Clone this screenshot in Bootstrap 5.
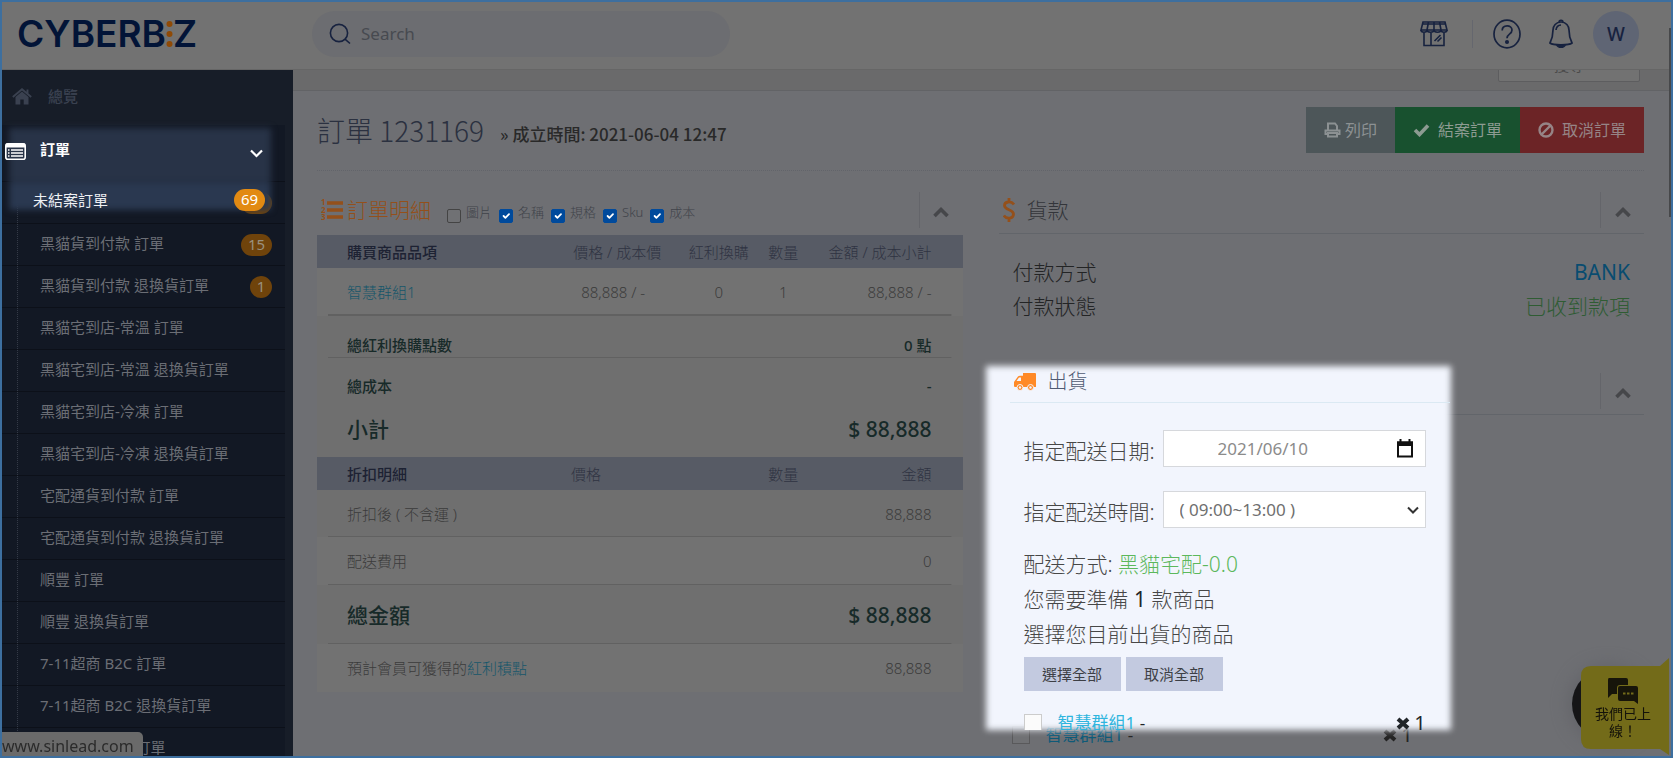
<!DOCTYPE html>
<html lang="zh-Hant">
<head>
<meta charset="utf-8">
<meta name="viewport" content="width=device-width, initial-scale=1">
<title>訂單 1231169 - CYBERBIZ</title>
<link href="https://cdn.jsdelivr.net/npm/bootstrap@5.3.0/dist/css/bootstrap.min.css" rel="stylesheet">
<style>
:root{--edge:#3d6f9f;--head:#727272;--page:#6e6f73;--side:#171d28;--sub:#121824;--bar:#575b65;--orange:#94501b;--navy:#17223f}
body{font-family:"Noto Sans","Noto Sans CJK TC",sans-serif;font-size:15px;line-height:20px;font-weight:300;background:var(--page);color:#33353a}
a{text-decoration:none}
svg{display:block;flex:none}
.frame{height:100vh;border:2px solid var(--edge);overflow:hidden}
.topbar{height:68px;background:var(--head);flex:none;border-bottom:1px solid #666;padding:0 32px 4px 15px}
.brand{width:295px;font-family:Inter,sans-serif;font-weight:600;font-size:37px;line-height:40px;color:#021437}
.search{width:418px;height:46px;background:#6c6d71;border-radius:23px;padding:0 17px}
.search input{background:none;border:0;outline:0;color:#4b4e55;font-size:17px;font-weight:400}
.search input::placeholder{color:#474a50;opacity:1}
.tool{background:none;border:0;padding:0;color:var(--navy)}
.rule-v{width:1px;height:28px;background:#65676e}
.avatar{width:46px;height:46px;background:#5f6574;color:var(--navy);font-size:19px;font-weight:500}
.sidebar{width:291px;background:var(--side);flex:none;overflow:hidden}
.home{height:55px;padding:0 0 3px 10px;color:#3a4150;font-weight:500}
.menu{width:283px;background:var(--sub)}
.menu .group{height:56px}
.menu ul{margin:0}
.menu li{border-top:1px solid #0c1019;height:42px}
.menu li a{color:#6b6e75;padding:0 13px 4px 38px;height:41px;font-weight:400}
.menu li .pill{margin-top:4px}
.tree{left:15px;top:56px;bottom:0;border-left:1px dotted #343a47}
.pill{min-width:31px;height:22px;border-radius:11px;background:#6f430b;color:#99917f;font-size:15px;line-height:21px;text-align:center;font-weight:400}
.pill-round{min-width:22px}
.lit{left:6px;top:1px;width:264px;height:86px;z-index:2}
.lit::before{content:"";position:absolute;inset:2px 1px 2px 1px;background:linear-gradient(#283347 53px,#151c29 53px,#151c29 54px,#2a3850 54px);filter:blur(3px)}
.lit>*{position:relative}
.lit .tophalf{height:54px;padding:0 9px 4px 0;margin-left:-3px;gap:14px;color:#fff;font-weight:700}
.lit .lowhalf{height:34px;padding:5px 7px 0 25px;color:#eef0f4;font-weight:400}
.lit .lowhalf a{color:inherit}
.lit .pill{background:#e28a12;color:#fff}
.content{min-width:0;overflow:hidden}
.strip{height:21px;background:#6a6a6b;border-bottom:1px solid #626366;overflow:hidden;padding:0 31px 8px 0}
.strip button{width:142px;height:34px;background:#727272;border:1px solid #5d5d5f;border-radius:2px;color:#4a4a4a;font-size:15px;flex:none}
.inner{padding:0 27px 0 24px}
.titlebar{height:80px;border-bottom:1px dotted #62646a;padding-bottom:2px}
.titlebar h1,.titlebar h2{font-family:"Noto Sans CJK TC","Noto Sans",sans-serif}
.titlebar h1{font-size:28px;line-height:40px;font-weight:300;color:#2b3140}
.titlebar h2{font-size:17px;line-height:24px;font-weight:500;color:#292929}
.act{height:46px;border:0;border-radius:0;font-size:16px;padding:0 18px;color:#8c9193}
.act-print{background:#4d5659}.act-done{background:#18512f;color:#8d9b92}.act-stop{background:#6c2426;color:#968486}
.columns{--bs-gutter-x:36px;padding-top:21px}
.phead{height:36px}
.phead h3{font-size:21px;line-height:28px;font-weight:300}
.fold{width:44px;height:36px;background:none;border:0;border-left:1px solid #64656a;color:#46474a;padding-top:4px}
.underline{border-bottom:1px solid #62656a;padding-bottom:6px;height:42px}
.opt{font-size:13px;line-height:20px;color:#40434a;gap:5px}
.opt label{margin-right:2px}
.opt input.form-check-input{width:14px;height:14px;margin:7px 0 0;border:1px solid #444;border-radius:2px;background-color:#707174;flex:none}
.opt input.form-check-input:checked{background-color:#004a9c;border-color:#004a9c}
.orders{width:100%;table-layout:fixed;margin-top:7px;background:#727272;color:#3b3b3b}
.orders td,.orders th{padding:0;font-weight:300}
.orders th:first-child,.orders td:first-child{padding-left:30px}
.orders th:last-child,.orders td:last-child{padding-right:31px;text-align:right}
.orders .cols{background:var(--bar);color:#2f3342;height:33px}
.orders .cols th:first-child{color:#1d2233;font-weight:500}
.orders .alt{background-color:#6f6f6f}
.line{background-image:linear-gradient(#616161,#616161);background-size:calc(100% - 22px) 1px;background-position:bottom center;background-repeat:no-repeat}
.line-2{background-size:calc(100% - 22px) 2px}
.orders .dark td{color:#172a29;font-weight:500;line-height:25px}
.orders .big td{font-size:21px;line-height:28px}
.h59{height:59px}.h57{height:57px}.h48{height:48px}.h47{height:47px}.h42{height:42px}
.orders a{color:#16566a}
.facts{font-size:21px;line-height:34px;padding:21px 14px 0;color:#232425}
.facts a{color:#084c70;font-weight:400}
.facts .ok{color:#2f5c33}
.ship{margin-top:50px}
.spot{left:-16px;top:-10px;width:73%;height:370px;z-index:2}
.spot::before{content:"";position:absolute;inset:3px;background:#f2f5fd;filter:blur(3px)}
.spot-in{position:relative;height:367px;overflow:hidden;font-size:21px;color:#474747}
.spot h3{font-size:20px;line-height:28px;font-weight:300;color:#4f5a72}
.spot-head{margin:0 4px 0 27px;height:40px;border-bottom:1px solid #dbe9f3;padding:0 0 2px 4px}
.spot-body{padding:27px 28px 0 41px}
.field{height:37px;border:1px solid #d6d8dc;border-radius:0;background-color:#fff;font-size:17px;color:#8b8b8b;font-weight:400;padding:0 16px}
.field-date{padding-left:54px}
.cal{right:12px;top:9px}
.pickrow{height:37px;margin-bottom:24px;gap:5px}
.pickrow label{white-space:nowrap;flex:none;width:134px;padding-top:5px}
select.field{color:#6f6f6f;background-image:url("data:image/svg+xml,%3Csvg xmlns='http://www.w3.org/2000/svg' viewBox='0 0 12 12'%3E%3Cpath d='M1 3.5 6 8.5 11 3.5' fill='none' stroke='%23333' stroke-width='2'/%3E%3C/svg%3E");background-size:12px 12px;background-position:right 6px center}
.spot p{line-height:35px;margin:0}
.spot .pickrow+p{margin-top:-5px}
.spot .ok{color:#5cb85c}
.picks{gap:5px;padding-top:5px}
.sel{width:97px;height:34px;background:#c3cae0;border:0;border-radius:0;font-size:15px;padding:0;color:#3d3f45;font-weight:400}
.item{font-size:17px;line-height:24px;font-weight:400}
.item a{color:#2fb5de}
.item .qty{font-size:20px}
.item input.form-check-input{width:18px;height:18px;margin:0;border-radius:0;border:1px solid #ccc;background:#fbfbfb}
.ghost{padding:0 70px 0 13px;margin-top:308px;color:#242424}
.ghost a{color:#0e5a78}
.ghost input.form-check-input{background:#707174;border-color:#59595b}
.chat{right:4px;bottom:3px;width:88px;height:97px;z-index:3}
.chat::before{content:"";position:absolute;left:-9px;top:10px;width:72px;height:72px;border-radius:36px;background:#151517;box-shadow:0 0 16px 4px #64656a}
.chat button{position:relative;background:none;border:0;width:84px;height:97px;padding:3px 12px 0 12px;font-size:14px;line-height:17px;color:#14120a;font-weight:400}
.chat .bubble{position:absolute;inset:0}
.status{left:2px;bottom:2px;width:141px;height:24px;background:#6a6a6a;border-radius:0 5px 0 0;color:#2b2b2b;font-size:16px;line-height:20px;padding-top:4px;font-weight:400;z-index:3;white-space:nowrap}
.scroll{right:2px;top:28px;width:2px;height:189px;background:#47484a;z-index:3}
</style>
</head>
<body>
<div class="frame d-flex flex-column">
  <header class="topbar d-flex align-items-center">
    <a href="#" class="brand d-flex align-items-center"><span>CYBERB</span>
      <svg width="7" height="28" viewBox="0 0 7 28" fill="#8f4a06"><circle cx="3.5" cy="4" r="3"/><circle cx="3.5" cy="14" r="3"/><circle cx="3.5" cy="24" r="3"/></svg><span>Z</span></a>
    <form class="search d-flex align-items-center gap-2">
      <svg width="22" height="22" viewBox="0 0 22 22" fill="none" stroke="#17223f" stroke-width="1.6"><circle cx="10" cy="10" r="8.6"/><path d="M16 16.2 21 20.500"/></svg>
      <input type="text" class="flex-grow-1" placeholder="Search" aria-label="Search">
    </form>
    <div class="d-flex align-items-center ms-auto">
      <button class="tool" aria-label="商店"><svg width="28" height="26" viewBox="0 0 28 26" fill="none" stroke="currentColor" stroke-width="1.600"><path d="M3 1h22l2 8H1z M8.500 1 7 9M14 1v8M19.500 1 21 9M3 3h22"/><path d="M1 9c0 3 6 3 6 0 0 3 7 3 7 0 0 3 7 3 7 0 0 3 6 3 6 0M4 12v12.500h20V12M11 12v12.500M14.500 20l6-6M17.500 20.500l4-4"/></svg></button>
      <span class="rule-v ms-4 me-3"></span>
      <button class="tool ms-1" aria-label="說明"><svg width="28" height="30" viewBox="0 0 28 30" fill="none" stroke="currentColor" stroke-width="1.700"><ellipse cx="14" cy="15" rx="13" ry="13.800"/><path d="M9.200 11.500c0-6 9.800-6 9.800-.5 0 4.500-5 3.800-5 8.200"/><circle cx="14" cy="23" r="1.200" fill="currentColor"/></svg></button>
      <button class="tool ms-4" aria-label="通知"><svg class="mx-1" width="24" height="30" viewBox="0 0 24 30" fill="none" stroke="currentColor" stroke-width="1.700"><path d="M10 3.500c0-3 4-3 4 0M12 3c-5 0-8 4-8 8 0 7-1 9-3 13 3 2.500 19 2.500 22 0-2-4-3-6-3-13 0-4-3-8-8-8zM7 11c.3-3 2-4.800 5-5"/><path d="M8 26c1 3 7 3 8 0z" fill="currentColor"/></svg></button>
      <button class="tool avatar rounded-circle ms-3 d-flex align-items-center justify-content-center">W</button>
    </div>
  </header>
  <div class="d-flex flex-grow-1 overflow-hidden">
    <nav class="sidebar">
      <div class="home d-flex align-items-center gap-3">
        <svg width="20" height="17" viewBox="0 0 20 17" fill="currentColor"><path d="M10 3.500 16.500 9v7.500h-4.800V11.500H8.300v5H3.500V9z"/><path d="M.8 9 10 1.200 19.200 9M15.500 1.500v4" fill="none" stroke="currentColor" stroke-width="1.900"/></svg><span>總覽</span>
      </div>
      <div class="menu position-relative">
        <div class="group"></div>
        <ul class="list-unstyled">
          <li><a href="#" class="d-flex align-items-center justify-content-end" aria-label="未結案訂單"><span class="pill"></span></a></li>
          <li><a href="#" class="d-flex align-items-center justify-content-between">黑貓貨到付款 訂單<span class="pill">15</span></a></li>
          <li><a href="#" class="d-flex align-items-center justify-content-between">黑貓貨到付款 退換貨訂單<span class="pill pill-round">1</span></a></li>
          <li><a href="#" class="d-flex align-items-center">黑貓宅到店-常溫 訂單</a></li>
          <li><a href="#" class="d-flex align-items-center">黑貓宅到店-常溫 退換貨訂單</a></li>
          <li><a href="#" class="d-flex align-items-center">黑貓宅到店-冷凍 訂單</a></li>
          <li><a href="#" class="d-flex align-items-center">黑貓宅到店-冷凍 退換貨訂單</a></li>
          <li><a href="#" class="d-flex align-items-center">宅配通貨到付款 訂單</a></li>
          <li><a href="#" class="d-flex align-items-center">宅配通貨到付款 退換貨訂單</a></li>
          <li><a href="#" class="d-flex align-items-center">順豐 訂單</a></li>
          <li><a href="#" class="d-flex align-items-center">順豐 退換貨訂單</a></li>
          <li><a href="#" class="d-flex align-items-center">7-11超商 B2C 訂單</a></li>
          <li><a href="#" class="d-flex align-items-center">7-11超商 B2C 退換貨訂單</a></li>
          <li><a href="#" class="d-flex align-items-center">全家超商 B2C 訂單</a></li>
        </ul>
        <span class="tree position-absolute"></span>
        <div class="lit position-absolute">
          <div class="tophalf d-flex align-items-center">
            <svg width="21" height="17" viewBox="0 0 21 17"><rect x=".8" y=".8" width="19.400" height="15.400" rx="2" fill="#283347" stroke="#fff" stroke-width="1.600"/><path d="M1 2.500h19" stroke="#fff" stroke-width="4"/><path d="M3 7h1.500M3 10h1.500M3 13h1.500M6 7h12M6 10h12M6 13h12" stroke="#fff" stroke-width="1.500"/></svg>
            <span class="mb-1">訂單</span>
            <svg class="ms-auto mt-1" width="13" height="9" viewBox="0 0 13 9" fill="none" stroke="#fff" stroke-width="2.200"><path d="M1 1.500 6.500 7 12 1.500"/></svg>
          </div>
          <div class="lowhalf d-flex align-items-center justify-content-between"><a href="#">未結案訂單</a><span class="pill">69</span></div>
        </div>
      </div>
    </nav>
    <main class="content flex-grow-1">
      <div class="strip d-flex justify-content-end align-items-end"><button>搜尋</button></div>
      <div class="inner">
        <div class="titlebar d-flex align-items-center">
          <h1 class="m-0">訂單 1231169</h1>
          <h2 class="m-0 ms-3 mt-2">» 成立時間: 2021-06-04 12:47</h2>
          <div class="d-flex ms-auto">
            <button class="btn act act-print d-flex align-items-center gap-1"><svg width="17" height="16" viewBox="0 0 17 16" fill="none" stroke="currentColor" stroke-width="2"><path d="M4 8V1.500h7L13 4v4M4 12H1.500V8.500h14V12H13M4 11h9v3.500H4z"/></svg>列印</button>
            <button class="btn act act-done d-flex align-items-center gap-2"><svg width="17" height="14" viewBox="0 0 17 14" fill="none" stroke="currentColor" stroke-width="3.600"><path d="M2 7l4.500 4.500L15 2.500"/></svg>結案訂單</button>
            <button class="btn act act-stop d-flex align-items-center gap-2"><svg width="16" height="16" viewBox="0 0 16 16" fill="none" stroke="currentColor" stroke-width="2.400"><circle cx="8" cy="8" r="6.500"/><path d="M3.500 12.500l9-9"/></svg>取消訂單</button>
          </div>
        </div>
        <div class="row columns">
          <section class="col-6">
            <div class="phead d-flex align-items-center">
              <svg class="ms-1" width="22" height="22" viewBox="0 0 22 22" style="color:var(--orange)"><path d="M6 4h16M6 11h16M6 18h16" stroke="currentColor" stroke-width="3.600"/><g fill="currentColor" font-size="8" font-weight="700" font-family="Open Sans, sans-serif"><text x="0" y="6">1</text><text x="0" y="14">2</text><text x="0" y="21">3</text></g></svg>
              <h3 class="m-0 ms-1" style="color:var(--orange)">訂單明細</h3>
              <div class="opt d-flex ms-3 mt-1">
                <input class="form-check-input" type="checkbox" id="o1"><label for="o1">圖片</label>
                <input class="form-check-input" type="checkbox" id="o2" checked><label for="o2">名稱</label>
                <input class="form-check-input" type="checkbox" id="o3" checked><label for="o3">規格</label>
                <input class="form-check-input" type="checkbox" id="o4" checked><label for="o4">Sku</label>
                <input class="form-check-input" type="checkbox" id="o5" checked><label for="o5">成本</label>
              </div>
              <button class="fold ms-auto d-flex align-items-center justify-content-center" aria-label="收合"><svg width="16" height="12" viewBox="0 0 16 12" fill="none" stroke="currentColor" stroke-width="3.600"><path d="M1.500 10 8 3.500 14.500 10"/></svg></button>
            </div>
            <table class="orders">
              <colgroup><col style="width:37.5%"><col style="width:18%"><col style="width:13.5%"><col style="width:6.5%"><col style="width:24.5%"></colgroup>
              <tbody>
              <tr class="cols"><th>購買商品品項</th><th class="text-center">價格 / 成本價</th><th class="text-center">紅利換購</th><th class="text-center">數量</th><th>金額 / 成本小計</th></tr>
              <tr class="line line-2 h48"><td><a href="#">智慧群組1</a></td><td class="text-center pe-2">88,888 / -</td><td class="text-center">0</td><td class="text-center">1</td><td>88,888 / -</td></tr>
              <tr class="line alt dark h42 align-bottom"><td colspan="4">總紅利換購點數</td><td>0 點</td></tr>
              <tr class="alt dark h57"><td colspan="4">總成本</td><td>-</td></tr>
              <tr class="alt dark big align-top h42"><td colspan="4">小計</td><td>$ 88,888</td></tr>
              <tr class="cols"><th>折扣明細</th><th class="ps-2">&nbsp;價格</th><th></th><th class="text-center">數量</th><th>金額</th></tr>
              <tr class="line alt h47"><td colspan="4">折扣後 ( 不含運 )</td><td>88,888</td></tr>
              <tr class="line h48"><td colspan="4">配送費用</td><td>0</td></tr>
              <tr class="line alt dark big h59"><td colspan="4">總金額</td><td>$ 88,888</td></tr>
              <tr class="h48"><td colspan="4">預計會員可獲得的<a href="#">紅利積點</a></td><td>88,888</td></tr>
              </tbody>
            </table>
          </section>
          <section class="col-6">
            <div class="underline">
              <div class="phead d-flex align-items-center">
                <svg class="ms-1" width="12" height="26" viewBox="0 0 12 26" fill="none" stroke="#94501b" stroke-width="2.800"><path d="M11 7.500C8 3.500 1.500 4.500 1.500 8.500 1.500 13.500 10.500 12 10.500 17c0 5-7 5.500-9.700 1.500M6 1v4M6 21v4"/></svg>
                <h3 class="m-0 ms-2 ps-1">貨款</h3>
                <button class="fold ms-auto d-flex align-items-center justify-content-center" aria-label="收合"><svg width="16" height="12" viewBox="0 0 16 12" fill="none" stroke="currentColor" stroke-width="3.600"><path d="M1.500 10 8 3.500 14.500 10"/></svg></button>
              </div>
            </div>
            <div class="facts">
              <div class="d-flex justify-content-between"><span>付款方式</span><a href="#">BANK</a></div>
              <div class="d-flex justify-content-between"><span>付款狀態</span><span class="ok">已收到款項</span></div>
            </div>
            <div class="ship position-relative">
              <div class="underline d-flex justify-content-end">
                <button class="fold d-flex align-items-center justify-content-center" aria-label="收合"><svg width="16" height="12" viewBox="0 0 16 12" fill="none" stroke="currentColor" stroke-width="3.600"><path d="M1.500 10 8 3.500 14.500 10"/></svg></button>
              </div>
              <div class="w-75"><div class="item ghost d-flex align-items-center">
                <input class="form-check-input" type="checkbox" id="g1"><label class="ms-3" for="g1"><a href="#">智慧群組1</a> -</label>
                <svg class="ms-auto" width="14" height="13" viewBox="0 0 14 13" stroke="currentColor" stroke-width="4"><path d="M2 2l10 9M12 2 2 11"/></svg><span class="qty ms-1">1</span>
              </div></div>
              <div class="spot position-absolute"><div class="spot-in">
                <div class="spot-head d-flex align-items-center">
                  <svg width="22" height="18" viewBox="0 0 22 18" fill="#ff8a27"><path d="M9 0h12q1 0 1 1v13H1q-1 0-1-1V9l4-5.500q.5-.8 2-.8h3z"/><path d="M2.500 8 5 4.500h2V8z" fill="#f2f5fd"/><g stroke="#f2f5fd" stroke-width="1"><circle cx="6" cy="14.500" r="3"/><circle cx="16.500" cy="14.500" r="3"/></g><circle cx="6" cy="14.500" r="1.200" fill="#f2f5fd"/><circle cx="16.500" cy="14.500" r="1.200" fill="#f2f5fd"/></svg>
                  <h3 class="m-0 ms-2 ps-1">出貨</h3>
                </div>
                <div class="spot-body">
                  <div class="pickrow d-flex align-items-center"><label for="d">指定配送日期:</label><div class="position-relative flex-grow-1"><input type="text" id="d" class="field field-date form-control" value="2021/06/10"><svg class="cal position-absolute" width="18" height="19" viewBox="0 0 18 19"><path d="M2 3.500h14v14H2z" fill="none" stroke="#111" stroke-width="2"/><path d="M1 2.500h16V7H1zM3.500 0h2v3h-2zM12.500 0h2v3h-2z" fill="#111"/></svg></div></div>
                  <div class="pickrow d-flex align-items-center"><label for="t">指定配送時間:</label><select id="t" class="field form-select flex-grow-1"><option>( 09:00~13:00 )</option></select></div>
                  <p>配送方式: <span class="ok">黑貓宅配-0.0</span></p>
                  <p>您需要準備 <b class="fw-normal text-dark">1</b> 款商品</p>
                  <p>選擇您目前出貨的商品</p>
                  <div class="picks d-flex"><button class="btn sel">選擇全部</button><button class="btn sel">取消全部</button></div>
                  <div class="item d-flex align-items-center mt-3 pt-1 text-dark">
                    <input class="form-check-input" type="checkbox" id="s1"><label class="ms-3" for="s1"><a href="#">智慧群組1</a> -</label>
                    <svg class="ms-auto" width="14" height="13" viewBox="0 0 14 13" stroke="currentColor" stroke-width="4"><path d="M2 2l10 9M12 2 2 11"/></svg><span class="qty ms-1">1</span>
                  </div>
                </div>
              </div></div>
            </div>
          </section>
        </div>
      </div>
    </main>
  </div>
</div>
<div class="scroll position-fixed"></div>
<div class="status position-fixed">www.sinlead.com</div>
<div class="chat position-fixed">
  <svg class="bubble" width="88" height="97" viewBox="0 0 88 97"><path d="M10 8h69l9-8v97l-9-6H10Q0 91 0 81V18Q0 8 10 8z" fill="#736b19"/></svg>
  <button>
    <svg class="mx-auto" width="32" height="28" viewBox="0 0 32 28" fill="#17150a"><path d="M2 1h17q2 0 2 2v5h-8q-3 0-3 3v6H5l-4 4V3q0-2 1-2z"/><path d="M13 9h16q2 0 2 2v16l-4-3H13q-2 0-2-2V11q0-2 2-2z"/><path d="M16 16.500h2.500M20 16.500h2.500M24 16.500h2.500" stroke="#736b19" stroke-width="2"/></svg>
    我們已上線！
  </button>
</div>
<script src="https://cdn.jsdelivr.net/npm/bootstrap@5.3.0/dist/js/bootstrap.bundle.min.js"></script>
</body>
</html>
